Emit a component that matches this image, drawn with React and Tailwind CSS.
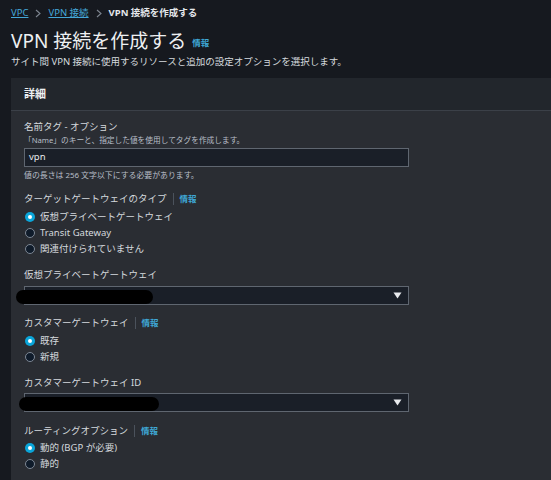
const font = { fontFamily: '"Noto Sans", "Noto Sans CJK JP", sans-serif' };

function Info() {
  return (
    <span className="flex items-center">
      <span className="mx-[6px] h-[12px] w-px bg-[#4b525c]" />
      <span className="text-[8.5px] font-bold text-[#3fa8d6]">情報</span>
    </span>
  );
}

function Radio({ checked, children }) {
  return (
    <div className="flex h-[16px] items-center">
      {checked ? (
        <span className="ml-[1px] flex h-[10px] w-[10px] items-center justify-center rounded-full bg-[#0aa5d9]">
          <span className="h-[4px] w-[4px] rounded-full bg-white" />
        </span>
      ) : (
        <span className="ml-[1px] h-[10px] w-[10px] rounded-full border border-[#7d8794] bg-[#0f1b2a]" />
      )}
      <span className="ml-[5px] text-[9.5px] leading-[16px] text-[#d5d9de]">{children}</span>
    </div>
  );
}

function Label({ children, info, className = '' }) {
  return (
    <div className={'flex h-[14px] items-center text-[9.5px] text-[#d5d9de] ' + className}>
      <span>{children}</span>
      {info && <Info />}
    </div>
  );
}

function Select({ blob }) {
  return (
    <div className="relative flex h-[19px] w-[385px] items-center justify-end border border-[#5f6670] bg-[#1a1f28] pr-[6px]">
      <span className={'absolute top-[3px] h-[14px] rounded-full bg-black ' + blob} />
      <svg width="9" height="7" viewBox="0 0 9 7">
        <path d="M0.5 0.5 H8.5 L4.5 6.5 Z" fill="#e8eaed" />
      </svg>
    </div>
  );
}

export default function App() {
  return (
    <div className="h-[480px] w-[551px] overflow-hidden bg-[#16191f] pl-[11px]" style={font}>
      {/* breadcrumb */}
      <div className="mt-[7px] flex h-[12px] items-center text-[9.5px]">
        <span className="text-[#44a7d8] underline">VPC</span>
        <span className="mx-[7px]">
          <svg width="6" height="9" viewBox="0 0 6 9"><path d="M1 1 L5 4.5 L1 8" stroke="#7d8590" strokeWidth="1.1" fill="none" /></svg>
        </span>
        <span className="text-[#44a7d8] underline">VPN 接続</span>
        <span className="mx-[7px]">
          <svg width="6" height="9" viewBox="0 0 6 9"><path d="M1 1 L5 4.5 L1 8" stroke="#7d8590" strokeWidth="1.1" fill="none" /></svg>
        </span>
        <span className="font-bold text-[#e4e7eb]">VPN 接続を作成する</span>
      </div>

      <div className="mt-[10px] flex h-[24px] items-center">
        <h1 className="text-[19px] leading-[24px] text-[#eef0f2]">VPN 接続を作成する</h1>
        <span className="ml-[6px] mt-[4px] text-[8.5px] font-bold text-[#3fa8d6]">情報</span>
      </div>
      <p className="mt-[2px] text-[9.5px] leading-[14px] text-[#d5d9de]">
        サイト間 VPN 接続に使用するリソースと追加の設定オプションを選択します。
      </p>

      {/* panel */}
      <div className="mt-[9px] w-[560px] bg-[#2a2d33]">
        <div className="flex h-[33px] items-center border-b border-[#3b4048] bg-[#22262c] pl-[13px]">
          <span className="text-[11px] font-bold text-[#eef0f2]">詳細</span>
        </div>

        <div className="pl-[13px] pt-[9px]">
          <Label>名前タグ - オプション</Label>
          <p className="text-[7.7px] leading-[12px] text-[#b8bfc8]">「Name」のキーと、指定した値を使用してタグを作成します。</p>
          <div className="mt-[2px] flex h-[19px] w-[385px] items-center border border-[#5f6670] bg-[#1a1f28] pl-[4px] text-[9.5px] text-[#e8eaed]">
            vpn
          </div>
          <p className="mt-[2px] text-[7.9px] leading-[12px] text-[#b8bfc8]">値の長さは 256 文字以下にする必要があります。</p>

          <Label info className="mt-[11px]">ターゲットゲートウェイのタイプ</Label>
          <div className="mt-[3px]">
            <Radio checked>仮想プライベートゲートウェイ</Radio>
            <Radio>Transit Gateway</Radio>
            <Radio>関連付けられていません</Radio>
          </div>

          <Label className="mt-[11px]">仮想プライベートゲートウェイ</Label>
          <div className="mt-[4px]">
            <Select blob="-left-[9px] w-[137px]" />
          </div>

          <Label info className="mt-[11px]">カスタマーゲートウェイ</Label>
          <div className="mt-[3px]">
            <Radio checked>既存</Radio>
            <Radio>新規</Radio>
          </div>

          <Label className="mt-[11px]">カスタマーゲートウェイ ID</Label>
          <div className="mt-[3px]">
            <Select blob="-left-[6px] w-[140px]" />
          </div>

          <Label info className="mt-[12px]">ルーティングオプション</Label>
          <div className="mt-[2px]">
            <Radio checked>動的 (BGP が必要)</Radio>
            <Radio>静的</Radio>
          </div>
          <div className="h-[20px]" />
        </div>
      </div>
    </div>
  );
}
